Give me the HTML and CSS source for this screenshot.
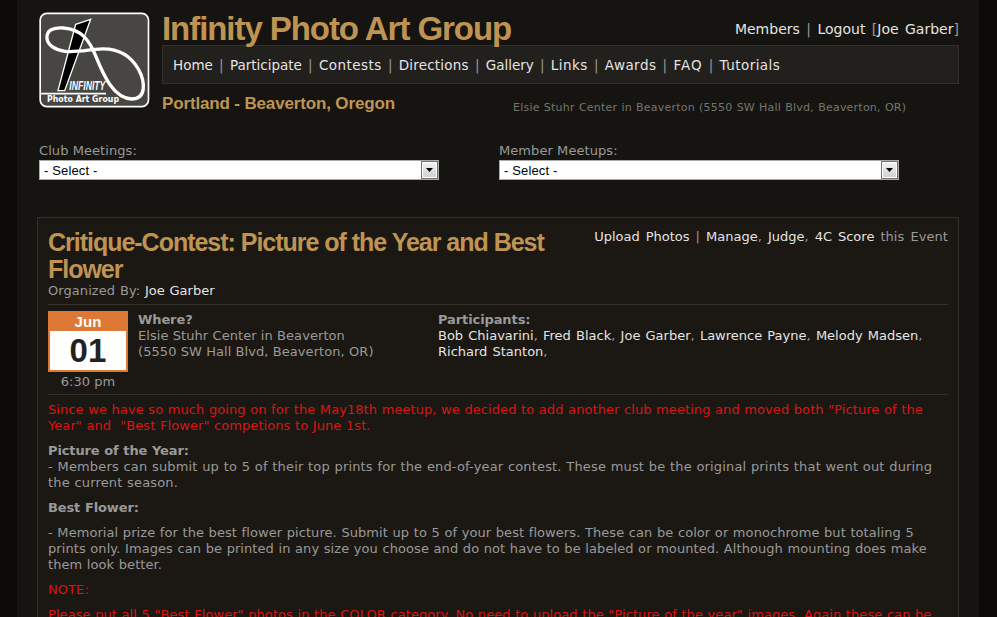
FILE: index.html
```html
<!DOCTYPE html>
<html lang="en">
<head>
<meta charset="utf-8">
<title>Infinity Photo Art Group</title>
<link rel="stylesheet" href="styles.css">
</head>
<body>
<div class="page">
  <header class="header">
    <svg class="logo" viewBox="117 36 333 288" role="img" aria-label="Infinity Photo Art Group">
      <rect x="120.500" y="40" width="325" height="280" rx="20" fill="#474643" stroke="#fff" stroke-width="5"/>
      <path d="M227 73 L272 58 L194 272 L174 272 Z" fill="#000" stroke="#fff" stroke-width="4"/>
      <path d="M120 281 H318" stroke="#fff" stroke-width="5"/>
      <path d="M141 116 C138 88 165 82 190 84 C245 88 268 120 288 170 C312 230 342 294 395 297 C440 297 436 245 415 207 C387 158 340 141 285 148 C250 152 222 157 195 154 C165 150 143 135 141 116 Z" fill="none" stroke="#fff" stroke-width="10"/>
      <text class="logo-name" x="208" y="270" textLength="108" lengthAdjust="spacingAndGlyphs">INFINITY</text>
      <text class="logo-group" x="141" y="306" textLength="216" lengthAdjust="spacingAndGlyphs">Photo Art Group</text>
    </svg>
    <div class="heading">
      <div class="title-row">
        <h1>Infinity Photo Art Group</h1>
        <div class="account"><a>Members</a> | <a>Logout</a> [<a>Joe Garber</a>]</div>
      </div>
      <nav class="nav"><a>Home</a><i>|</i><a>Participate</a><i>|</i><a class="wide">Contests</a><i>|</i><a class="loose">Directions</a><i>|</i><a>Gallery</a><i>|</i><a class="wide">Links</a><i>|</i><a class="wide">Awards</a><i>|</i><a class="widest">FAQ</a><i>|</i><a class="wide">Tutorials</a></nav>
      <div class="place-row">
        <h2>Portland - Beaverton, Oregon</h2>
        <span class="address">Elsie Stuhr Center in Beaverton (5550 SW Hall Blvd, Beaverton, OR)</span>
      </div>
    </div>
  </header>

  <div class="filters">
    <div class="field">
      <span>Club Meetings:</span>
      <div class="select"><span>- Select -</span><b class="arrow"><svg viewBox="0 0 7 4"><path d="M0 0H7L3.500 4Z"/></svg></b></div>
    </div>
    <div class="field">
      <span>Member Meetups:</span>
      <div class="select"><span>- Select -</span><b class="arrow"><svg viewBox="0 0 7 4"><path d="M0 0H7L3.500 4Z"/></svg></b></div>
    </div>
  </div>

  <main class="event">
    <div class="event-head">
      <div class="event-title">
        <h2>Critique-Contest: Picture of the Year and Best<br>Flower</h2>
        <div class="organizer">Organized By: <a>Joe Garber</a></div>
      </div>
      <div class="actions"><a>Upload Photos</a> | <a>Manage</a>, <a>Judge</a>, <a>4C Score</a> this Event</div>
    </div>
    <div class="details">
      <div class="when">
        <div class="calendar"><div class="month">Jun</div><div class="day">01</div></div>
        <div class="time">6:30 pm</div>
      </div>
      <div class="where"><strong>Where?</strong><br>Elsie Stuhr Center in Beaverton<br>(5550 SW Hall Blvd, Beaverton, OR)</div>
      <div class="people"><strong>Participants:</strong><br><a>Bob Chiavarini</a>, <a>Fred Black</a>, <a>Joe Garber</a>, <a>Lawrence Payne</a>, <a>Melody Madsen</a>,<br><a>Richard Stanton</a>,</div>
    </div>
    <div class="description">
      <p class="alert">Since we have so much going on for the May18th meetup, we decided to add another club meeting and moved both "Picture of the<br>Year" and&nbsp; "Best Flower" competions to June 1st.</p>
      <p class="rules"><strong>Picture of the Year:</strong><br>- Members can submit up to 5 of their top prints for the end-of-year contest. These must be the original prints that went out during<br>the current season.</p>
      <p><strong>Best Flower:</strong></p>
      <p>- Memorial prize for the best flower picture. Submit up to 5 of your best flowers. These can be color or monochrome but totaling 5<br>prints only. Images can be printed in any size you choose and do not have to be labeled or mounted. Although mounting does make<br>them look better.</p>
      <p class="alert">NOTE:</p>
      <p class="alert">Please put all 5 "Best Flower" photos in the COLOR category. No need to upload the "Picture of the year" images. Again these can be</p>
    </div>
  </main>
</div>
</body>
</html>
```
FILE: styles.css
```css
* { box-sizing: border-box; }
html, body { height: 100%; }
body {
  margin: 0;
  overflow: hidden;
  background: #0c0b07;
  color: #999;
  font: 13px/16px "DejaVu Sans", Verdana, sans-serif;
  letter-spacing: 0.07px;
  white-space: nowrap;
}
h1, h2, p { margin: 0; }
a { color: #e4e4e2; letter-spacing: 0; }
h1, h2 { color: #bf9452; font-family: "Liberation Sans", Arial, sans-serif; }

.page {
  width: 962px;
  height: 617px;
  margin-left: 17px;
  padding: 12px 20px 0;
  overflow: hidden;
  background: #151410;
}

.header { display: flex; height: 128px; padding-left: 2px; }
.logo { width: 111px; height: 96px; flex: none; }
.logo-name { font: italic bold 40px "Liberation Sans", Arial, sans-serif; fill: #fff; }
.logo-group { font: bold 26px "DejaVu Sans", sans-serif; fill: #fff; }
.heading { width: 797px; margin-left: 12px; }
.title-row { display: flex; justify-content: space-between; height: 33px; }
h1 { position: relative; font-size: 33px; line-height: 34px; letter-spacing: -1.060px; }
.account { padding-top: 9px; font-size: 14px; word-spacing: 1.900px; }
.nav {
  display: flex;
  height: 39px;
  padding: 11px 10px 0;
  border: 1px solid #34312c;
  background: #22201d;
  font-size: 13.500px;
}
.nav i { width: 17px; text-align: center; font-style: normal; }
.nav .loose { letter-spacing: 0.200px; }
.nav .wide { letter-spacing: 0.450px; }
.nav .widest { letter-spacing: 1px; }
.place-row { display: flex; padding-top: 10px; }
.place-row h2 { width: 351px; font-size: 17px; line-height: 20px; letter-spacing: -0.150px; }
.address { padding-top: 6px; color: #77756f; font-size: 11px; line-height: 16px; letter-spacing: 0.230px; word-spacing: 0.400px; }

.filters { display: flex; gap: 60px; padding: 3px 0 0 2px; height: 77px; }
.field { width: 400px; }
.select {
  display: flex;
  justify-content: space-between;
  height: 20px;
  margin-top: 1px;
  padding-left: 4px;
  border: 1px solid #aaa;
  background: #fff;
  color: #000;
  font: 13px/20px "Liberation Sans", Arial, sans-serif;
  letter-spacing: 0.150px;
}
.arrow {
  display: flex;
  align-items: center;
  justify-content: center;
  width: 17px;
  border: 1px solid #707070;
  background: linear-gradient(#f3f3f3, #cfcfcf);
  box-shadow: inset 0 0 0 1px #fff;
}
.arrow svg { width: 7px; height: 4px; }

.event { height: 420px; padding: 11px 10px 0; border: 1px solid #34312c; background: #1b1813; }
.event-head { display: flex; justify-content: space-between; height: 76px; border-bottom: 1px solid #34312c; }
.event-head h2 { font-size: 25px; line-height: 27px; letter-spacing: -1.020px; }
.organizer { line-height: 16px; word-spacing: 0.600px; }
.actions { word-spacing: 1.800px; }
.details { display: flex; height: 90px; padding-top: 6px; border-bottom: 1px solid #34312c; }
.when { width: 80px; flex: none; text-align: center; }
.calendar { height: 61px; border: 2px solid #de7837; background: #fff; font-family: "Liberation Sans", Arial, sans-serif; font-weight: bold; }
.month { height: 18px; background: #de7837; color: #fff; font-size: 15px; line-height: 17px; }
.day { color: #222; font-size: 33px; line-height: 39px; }
.time { padding-top: 2px; }
.where { width: 310px; padding-left: 10px; }
.people, .where { padding-top: 1px; line-height: 16px; }
.people { word-spacing: 1px; }
.people strong { letter-spacing: -0.100px; }
.where strong { letter-spacing: -0.100px; }
.description { padding-top: 7px; word-spacing: 0.380px; }
.description p { margin-bottom: 9px; }
.description strong { letter-spacing: -0.130px; }
.description .rules { letter-spacing: 0.155px; }
.alert { color: #dc1414; }
```
